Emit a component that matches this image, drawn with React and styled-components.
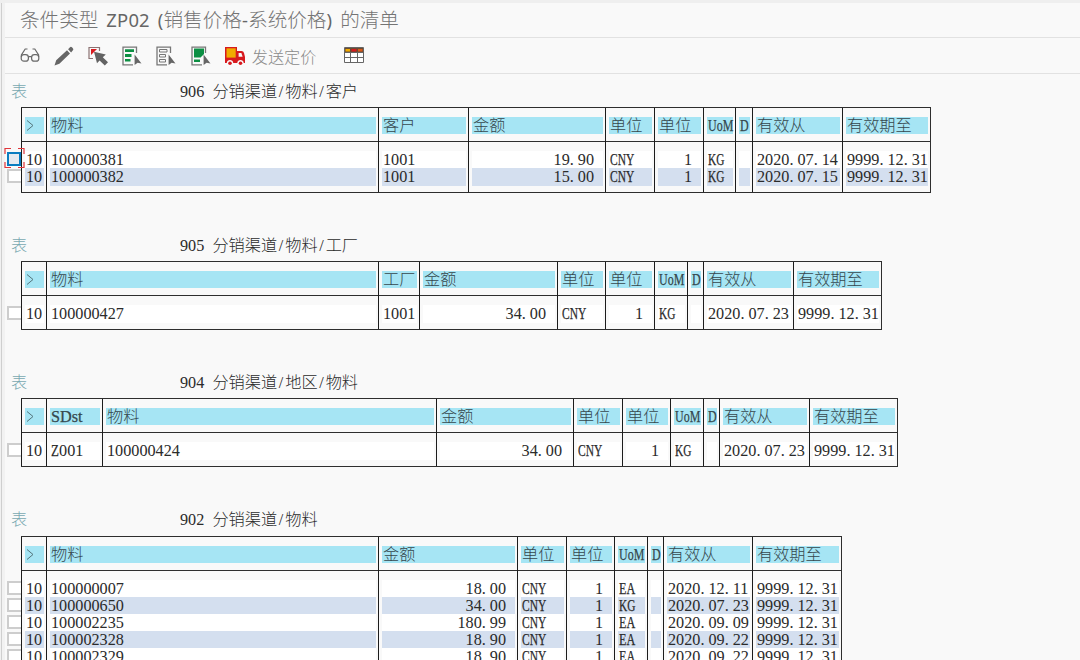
import React from 'react';
import styled, { createGlobalStyle } from 'styled-components';

const GlobalStyle = createGlobalStyle`
  * {
    box-sizing: border-box;
  }
  html,
  body {
    margin: 0;
    background: #f9f9f9;
    overflow: hidden;
  }
`;

const Window = styled.div`
  display: flex;
  width: 1080px;
  height: 660px;
  overflow: hidden;
  background: #f9f9f9;
  border-top: 3px solid #efefef;
`;

const Edge = styled.div`
  flex: none;
  width: 5px;
  border-left: 1px solid #f1f1f1;
  background: linear-gradient(to right, #cfcfcf 1px, #f2f2f2 1px);
`;

const Main = styled.main`
  flex: 1;
  min-width: 0;
`;

const TitleBar = styled.h1`
  display: flex;
  align-items: center;
  height: 35px;
  margin: 0;
  padding-left: 15px;
  border-bottom: 1px solid #e2e2e2;
  font-family: 'Noto Sans', 'Noto Sans CJK SC', sans-serif;
  font-size: 19.6px;
  font-weight: 300;
  line-height: 34px;
  color: #747474;
  white-space: pre;
`;

const Latin = styled.span`
  font-size: 18.4px;
  font-weight: 400;
  word-spacing: 3px;
  letter-spacing: 0.2px;
  color: #666;
`;

const Toolbar = styled.div`
  display: flex;
  align-items: center;
  gap: 14.2px;
  height: 36px;
  padding-left: 14.6px;
  border-bottom: 1px solid #e2e2e2;
`;

const IconButton = styled.button`
  display: flex;
  align-items: center;
  height: 24px;
  margin: 0 ${({ $after }) => $after || 0}px 0 0;
  padding: 0;
  border: 0;
  background: none;
  color: #8a8a8a;
  font-family: 'Noto Sans CJK SC', sans-serif;
  font-size: 16.2px;
  font-weight: 300;
  line-height: 22px;
  gap: 6px;
  svg {
    display: block;
  }
`;

const List = styled.div`
  padding: 7.9px 0 0 2px;
  font-family: 'Liberation Serif', 'Noto Sans CJK SC', serif;
  font-size: 16.2px;
  font-weight: 300;
  line-height: 19.2px;
  color: #2b2b2b;
`;

const Section = styled.section`
  height: ${({ $rows }) => (7 + $rows) * 17.13}px;
`;

const Caption = styled.div`
  display: flex;
  height: 25.4px;
  padding-left: 4px;
  line-height: 20px;
  white-space: pre;
`;

const CaptionKey = styled.span`
  width: 169px;
  color: #79a9b1;
`;

const Body = styled.div`
  display: flex;
`;

const Checks = styled.div`
  display: flex;
  flex-direction: column;
  flex: none;
  width: 14px;
  padding-top: 44px;
`;

const CheckSlot = styled.div`
  position: relative;
  height: 17.13px;
  padding-top: 1px;
`;

const CheckBox = styled.div`
  width: 14px;
  height: 14px;
  border: ${({ $focus }) => ($focus ? '2px solid #0a7cc0' : '2px solid #cdcdcd')};
  border-right-width: ${({ $focus }) => ($focus ? 2 : 0)}px;
  background: ${({ $focus }) => ($focus ? '#e6eaf0' : '#fff')};
`;

const FocusMark = styled.svg`
  position: absolute;
  left: -3px;
  top: -4px;
  z-index: 1;
`;

const Grid = styled.div`
  display: flex;
  border: 1px solid #2e2e2e;
  border-left: 0;
`;

const Column = styled.div`
  width: ${({ $width }) => $width}px;
  border-left: 1px solid #1c1c1c;
  padding-bottom: 6.4px;
`;

const HeadCell = styled.div`
  height: 34px;
  padding: 9px 2px 0 3px;
  border-bottom: 1px solid #2e2e2e;
  span.fill {
    display: block;
    height: 17px;
    padding-left: 1px;
    background: #a6e5f4;
    white-space: nowrap;
    color: #35474d;
  }
`;

const Cells = styled.div`
  padding: 9px 2px 0 3px;
`;

const Cell = styled.div`
  height: 17.13px;
  padding: 0 ${({ $right }) => ($right ? 9 : 0)}px 0 1px;
  background: ${({ $striped }) => ($striped ? '#d4dfef' : '#fff')};
  text-align: ${({ $right }) => ($right ? 'right' : 'left')};
  white-space: nowrap;
`;

const HalfWidth = styled.span`
  display: inline-block;
  width: 0.5em;
  text-align: left;
  text-indent: ${({ $slash }) => ($slash ? 0.1 : 0)}em;
`;

const Word = styled.span`
  display: inline-block;
  width: ${({ $length }) => $length * 0.5}em;
  text-align: left;
  transform: scaleX(${({ $squeeze }) => $squeeze});
  transform-origin: 0 50%;
  -webkit-text-stroke: 0.25px currentColor;
`;

const squeeze = { CNY: 0.71, KG: 0.7, EA: 0.75, UoM: 0.74, D: 0.74, Z: 0.8, SDst: 1 };

// Latin letters and punctuation take half of a full-width character
const FixedText = ({ children }) =>
  children.split(/([A-Za-z]+|[./ ])/).map((part, i) => {
    if (/^[./ ]$/.test(part)) {
      return (
        <HalfWidth key={i} $slash={part === '/'}>
          {part}
        </HalfWidth>
      );
    }
    if (/^[A-Za-z]+$/.test(part)) {
      return (
        <Word key={i} $length={part.length} $squeeze={squeeze[part]}>
          {part}
        </Word>
      );
    }
    return part;
  });

const Chevron = () => (
  <svg width="12" height="17" viewBox="0 0 12 17" fill="none" stroke="#55757c">
    <path d="M1 3.5L7 8.5L1 13.5" />
  </svg>
);

const GlassesIcon = () => (
  <svg width="20" height="20" viewBox="0 0 20 20" fill="none" stroke="#686868" strokeWidth="1.2">
    <rect x="1.2" y="8.6" width="7.2" height="6.6" rx="2.8" />
    <rect x="11.6" y="8.6" width="7.2" height="6.6" rx="2.8" />
    <path d="M8.4 10.6H11.6M1.4 11V9L5.2 3H7.5M18.6 11V9L14.8 3H12.5" />
  </svg>
);

const PencilIcon = () => (
  <svg width="20" height="20" viewBox="0 0 20 20" fill="#666">
    <path d="M.5 19.5L2.2 14.2L13 4.3L16 7.5L5.4 17.7ZM14.1 3.2L16 1.2Q17 .4 18.2 1.5L19 2.4Q19.8 3.4 18.9 4.3L17.1 6.4Z" />
  </svg>
);

const SelectIcon = () => (
  <svg width="20" height="20" viewBox="0 0 20 20">
    <path d="M11.5 5V1.5H1V12.5H5" fill="none" stroke="#8c7272" strokeWidth="1.2" />
    <path d="M3 3H9L3 9Z" fill="#d9191e" />
    <path d="M6 5.8L17.8 8.6L14.8 11.2L20 16.2L16.8 19.4L11.6 14.4L9 17.2Z" fill="#636363" />
  </svg>
);

const PageIcon = ({ children }) => (
  <svg width="20" height="20" viewBox="0 0 20 20">
    <path d="M14.5 7V1.2H1V18.8H11" fill="none" stroke="#777" strokeWidth="1.3" />
    {children}
    <path d="M12.6 8.5L19.5 17.5L15.6 16.8L12.6 19Z" fill="#666" />
  </svg>
);

const TruckIcon = () => (
  <svg width="21" height="20" viewBox="0 0 21 20">
    <path d="M0 1H12V5H16.5Q18.5 5 19 7L20 11V17H0Z" fill="#d7191e" />
    <path d="M1.5 2.3H10.7V11.6H1.5Z" fill="#f0ab00" />
    <path d="M13.6 7H16.4L17.6 10.8H13.6Z" fill="#f9f9f9" />
    <path d="M1.8 18V16.8Q2.2 14 5 14T8.2 16.8V18ZM12.3 18V16.8Q12.7 14 15.5 14T18.7 16.8V18Z" fill="#f9f9f9" />
    <circle cx="5" cy="17.3" r="1.8" fill="#d7191e" />
    <circle cx="15.5" cy="17.3" r="1.8" fill="#d7191e" />
  </svg>
);

const TableIcon = () => (
  <svg width="20" height="18" viewBox="0 0 20 18">
    <path d="M.5 .5H19.5V15.5H.5Z" fill="#fff" stroke="#666" />
    <path d="M1 1H19V5H1Z" fill="#6b4b32" />
    <path d="M1.5 2H6V4.5H1.5Z" fill="#f0ab00" />
    <path d="M7.5 2H12.5V4.5H7.5Z" fill="#d7191e" />
    <path d="M14 2H18.5V4.5H14Z" fill="#d95b1a" />
    <path d="M1 5.5H19M1 10.5H19M6.5 5V15M13.5 5V15" stroke="#666" fill="none" />
  </svg>
);

const columns = (widths, names) =>
  names.map((name, i) => ({
    name,
    width: widths[i],
    right: name === '金额' || (name === '单位' && names[i - 1] === '单位'),
  }));

const tables = [
  {
    title: '906 分销渠道/物料/客户',
    columns: columns(
      [25, 332, 90, 137, 49, 49, 32, 17, 90, 88],
      ['>', '物料', '客户', '金额', '单位', '单位', 'UoM', 'D', '有效从', '有效期至']
    ),
    rows: [
      ['10', '100000381', '1001', '19.90', 'CNY', '1', 'KG', '', '2020.07.14', '9999.12.31'],
      ['10', '100000382', '1001', '15.00', 'CNY', '1', 'KG', '', '2020.07.15', '9999.12.31'],
    ],
    focused: 0,
  },
  {
    title: '905 分销渠道/物料/工厂',
    columns: columns(
      [25, 332, 41, 138, 48, 49, 33, 16, 90, 88],
      ['>', '物料', '工厂', '金额', '单位', '单位', 'UoM', 'D', '有效从', '有效期至']
    ),
    rows: [['10', '100000427', '1001', '34.00', 'CNY', '1', 'KG', '', '2020.07.23', '9999.12.31']],
  },
  {
    title: '904 分销渠道/地区/物料',
    columns: columns(
      [25, 56, 334, 137, 49, 48, 33, 16, 90, 88],
      ['>', 'SDst', '物料', '金额', '单位', '单位', 'UoM', 'D', '有效从', '有效期至']
    ),
    rows: [['10', 'Z001', '100000424', '34.00', 'CNY', '1', 'KG', '', '2020.07.23', '9999.12.31']],
  },
  {
    title: '902 分销渠道/物料',
    columns: columns(
      [25, 332, 139, 49, 48, 33, 16, 89, 89],
      ['>', '物料', '金额', '单位', '单位', 'UoM', 'D', '有效从', '有效期至']
    ),
    rows: [
      ['10', '100000007', '18.00', 'CNY', '1', 'EA', '', '2020.12.11', '9999.12.31'],
      ['10', '100000650', '34.00', 'CNY', '1', 'KG', '', '2020.07.23', '9999.12.31'],
      ['10', '100002235', '180.99', 'CNY', '1', 'EA', '', '2020.09.09', '9999.12.31'],
      ['10', '100002328', '18.90', 'CNY', '1', 'EA', '', '2020.09.22', '9999.12.31'],
      ['10', '100002329', '18.90', 'CNY', '1', 'EA', '', '2020.09.22', '9999.12.31'],
    ],
  },
];

const ConditionTable = ({ title, columns: cols, rows, focused }) => (
  <Section $rows={rows.length}>
    <Caption>
      <CaptionKey>表</CaptionKey>
      <span>
        <FixedText>{title}</FixedText>
      </span>
    </Caption>
    <Body>
      <Checks>
        {rows.map((row, i) => (
          <CheckSlot key={row[1]}>
            <CheckBox $focus={i === focused} />
            {i === focused && (
              <FocusMark width="21" height="22" viewBox="0 0 21 22" fill="none" stroke="#e0353a" strokeWidth="1.2">
                <path d="M7 1.5H1V7M14 1.5H20V7M7 20.5H1V15M14 20.5H20V15" />
              </FocusMark>
            )}
          </CheckSlot>
        ))}
      </Checks>
      <Grid>
        {cols.map((col, c) => (
          <Column key={c} $width={col.width}>
            <HeadCell>
              <span className="fill">{col.name === '>' ? <Chevron /> : <FixedText>{col.name}</FixedText>}</span>
            </HeadCell>
            <Cells>
              {rows.map((row, r) => (
                <Cell key={row[1]} $striped={r % 2 === 1} $right={col.right}>
                  <FixedText>{row[c]}</FixedText>
                </Cell>
              ))}
            </Cells>
          </Column>
        ))}
      </Grid>
    </Body>
  </Section>
);

export default function App() {
  return (
    <>
      <GlobalStyle />
      <Window>
        <Edge />
        <Main>
          <TitleBar>
            条件类型<Latin> ZP02 (</Latin>销售价格<Latin>-</Latin>系统价格<Latin>) </Latin>的清单
          </TitleBar>
          <Toolbar>
            <IconButton>
              <GlassesIcon />
            </IconButton>
            <IconButton>
              <PencilIcon />
            </IconButton>
            <IconButton>
              <SelectIcon />
            </IconButton>
            <IconButton>
              <PageIcon>
                <path d="M3 3.2H12V6H3ZM3 8H9.5V11H3ZM3 13H8.5V15.5H3Z" fill="#0c8f43" />
              </PageIcon>
            </IconButton>
            <IconButton>
              <PageIcon>
                <path d="M3.5 3.5H11V6H3.5ZM3.5 8.5H9.5V11H3.5ZM3.5 13.5H9.5V16H3.5Z" fill="none" stroke="#777" />
              </PageIcon>
            </IconButton>
            <IconButton>
              <PageIcon>
                <path d="M3 2.5H13V8L9.5 11.5H3ZM3 13.5H9V16H3Z" fill="#0c8f43" />
              </PageIcon>
            </IconButton>
            <IconButton $after={13}>
              <TruckIcon />
              发送定价
            </IconButton>
            <IconButton>
              <TableIcon />
            </IconButton>
          </Toolbar>
          <List>
            {tables.map((table) => (
              <ConditionTable key={table.title} {...table} />
            ))}
          </List>
        </Main>
      </Window>
    </>
  );
}
